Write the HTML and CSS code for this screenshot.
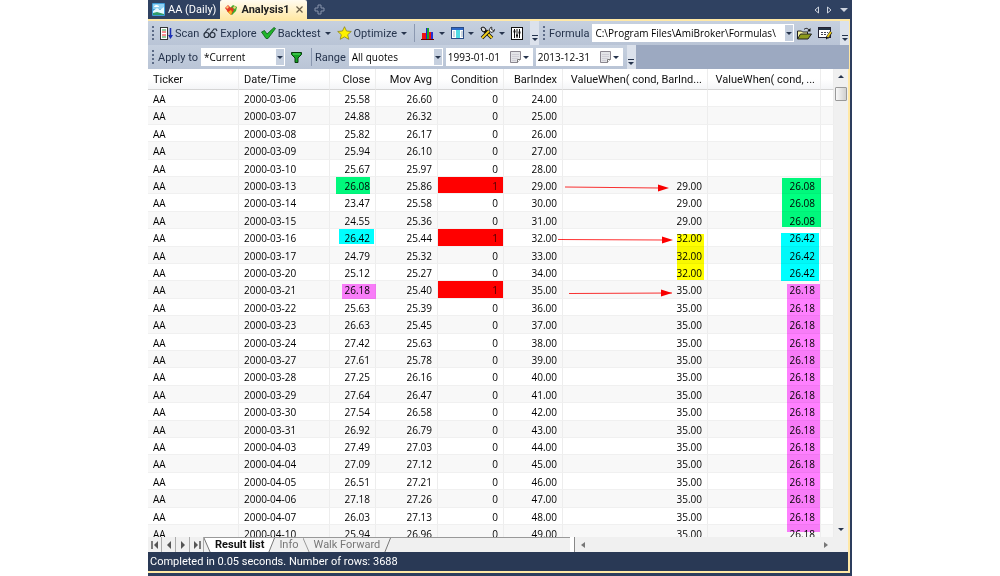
FILE: index.html
```html
<!DOCTYPE html>
<html lang="en">
<head>
    <meta charset="UTF-8">
    <meta name="viewport" content="width=device-width, initial-scale=1.0">
    <title>Analysis1</title>
    <link rel="stylesheet" href="styles.css">
</head>
<body>
    <div class="window">
        <div class="tab-bar">
            <button class="doc-tab">
                <svg width="13" height="13" viewBox="0 0 13 13"><rect width="13" height="13" rx="1" fill="#3f9bd6"/><path d="M1 1h11v5H1z" fill="#8fd0f2"/><path d="M1 8l4-3 3 2 4-3v8H1z" fill="#e8fbff"/><path d="M1 10l4-1 7 2v1H1z" fill="#2f9d6b"/><path d="M2 4c1-3 5-2 5 0z" fill="#fff"/></svg>
                AA (Daily)
            </button>
            <button class="doc-tab active">
                <svg width="14" height="12" viewBox="0 0 14 12"><path d="M1 4l3-3 3 3-3 4z" fill="#e8392b"/><path d="M6 4l3-3 4 2-1 4-4 4-4-3z" fill="#3fae2e"/><path d="M5 5l3-2 2 3-3 5-4-4z" fill="#e03a22"/><path d="M2 3l2-1 1 1-2 2zM9 3l2-1 1 2-2 1z" fill="#ffd27a"/><path d="M4 8l3-2 1 2-1 3z" fill="#f6b21b"/></svg>
                Analysis1
                <svg class="close" width="7" height="7" viewBox="0 0 7 7"><path d="M.5.5l6 6M6.500.5l-6 6" stroke="#6b5f48" stroke-width="1.200"/></svg>
            </button>
            <button class="new-tab" aria-label="New tab">
                <svg width="11" height="11" viewBox="0 0 11 11"><path d="M4 1h3v3h3v3H7v3H4V7H1V4h3z" fill="none" stroke="#8793ab"/></svg>
            </button>
            <div class="tab-nav">
                <svg width="5" height="8" viewBox="0 0 5 8"><path d="M4.500 1v6L1 4z" fill="none" stroke="#ced4df"/></svg>
                <svg width="5" height="8" viewBox="0 0 5 8"><path d="M.5 1v6L4 4z" fill="none" stroke="#ced4df"/></svg>
                <svg width="8" height="4" viewBox="0 0 8 4"><path d="M0 0h8L4 4z" fill="#ced4df"/></svg>
            </div>
        </div>

        <div class="toolbar">
            <div class="tool-group">
                <span class="grip"></span>
                <button class="tool">
                    <svg width="13" height="13" viewBox="0 0 13 13"><rect x=".5" y=".5" width="7" height="12" fill="#fff" stroke="#333"/><path d="M2 3h4M2 10h4" stroke="#2a9d3a"/><path d="M2 5h4M2 8h4" stroke="#e22"/><path d="M10.500 1v9" stroke="#1b2fb5" stroke-width="1.500"/><path d="M8 8h5l-2.500 4z" fill="#1b2fb5"/></svg>
                    Scan
                </button>
                <button class="tool">
                    <svg width="15" height="12" viewBox="0 0 15 12"><g fill="none" stroke="#26303e" stroke-width="1.200"><circle cx="3.500" cy="8" r="2.500"/><circle cx="9.500" cy="8" r="2.500"/><path d="M1 7l4-5h2M7 7l4-5h2l1 2M6 8h1"/></g></svg>
                    Explore
                </button>
                <button class="tool">
                    <svg width="15" height="12" viewBox="0 0 15 12"><path d="M.5 5l3-1.500 2.500 3.500L13 .5l1.500 1L7 11.500H5z" fill="#1fb52a" stroke="#0b5c15" stroke-width=".8"/></svg>
                    Backtest
                    <i class="arrow"></i>
                </button>
                <button class="tool">
                    <svg width="15" height="14" viewBox="0 0 15 14"><path d="M7.500.7l2 4.300 4.800.5-3.600 3.200 1.100 4.600-4.300-2.400-4.300 2.400 1.100-4.600L.7 5.500 5.500 5z" fill="#fff200" stroke="#8b8420" stroke-width=".8"/></svg>
                    Optimize
                    <i class="arrow"></i>
                </button>
                <span class="separator"></span>
                <button class="tool icon" aria-label="Report">
                    <svg width="14" height="13" viewBox="0 0 14 13"><path d="M1 6h4v6H1z" fill="#e11"/><path d="M5 1h3v11H5z" fill="#1ca52a"/><path d="M5 1h1v11H5z" fill="#1a22d8"/><path d="M8 5h3v7H8z" fill="#e11"/><path d="M10 5h2v7h-2z" fill="#2430d0"/><path d="M0 12.500h13" stroke="#600"/></svg>
                    <i class="arrow"></i>
                </button>
                <button class="tool icon" aria-label="Layout">
                    <svg width="13" height="12" viewBox="0 0 13 12"><rect x=".5" y=".5" width="12" height="11" fill="#fff" stroke="#2a4b86"/><path d="M1 1h11v2H1z" fill="#2c68c8"/><path d="M5 3h4v8H5z" fill="#50dbe4"/><path d="M2 5h2M2 7h2M2 9h2M10 5h2M10 7h2M10 9h2" stroke="#9ab"/></svg>
                    <i class="arrow"></i>
                </button>
                <button class="tool icon" aria-label="Settings">
                    <svg width="15" height="14" viewBox="0 0 15 14"><path d="M3 3l9 9" stroke="#111" stroke-width="3.500"/><path d="M1 2l2-1 2 1 1 2-2 2-2-1z" fill="#ddd" stroke="#111"/><path d="M8 8l4 4" stroke="#f3cf1b" stroke-width="2"/><path d="M2 12l7-7" stroke="#111" stroke-width="3.500"/><path d="M2 12l7-7" stroke="#f3cf1b" stroke-width="1.800"/><path d="M9 4l2-3 1 .5-.5 2 2 1 1-1-.5 2-3 1z" fill="#eee" stroke="#111" stroke-width=".8"/></svg>
                    <i class="arrow"></i>
                </button>
                <button class="tool icon" aria-label="Parameters">
                    <svg width="12" height="13" viewBox="0 0 12 13"><rect x=".5" y=".5" width="11" height="12" fill="#fff" stroke="#111"/><path d="M3.500 2v9M6 2v9M8.500 2v9" stroke="#111"/><path d="M2.500 4.500h2M5 8.500h2M7.500 5.500h2" stroke="#111" stroke-width="2"/></svg>
                </button>
                <button class="overflow" aria-label="More"><i class="arrow"></i></button>
            </div>
            <div class="tool-group grow">
                <span class="grip"></span>
                <label for="formula">Formula</label>
                <span class="combo grow">
                    <select id="formula"><option>C:\Program Files\AmiBroker\Formulas\</option></select>
                    <span class="drop"><i class="arrow"></i></span>
                </span>
                <button class="tool icon" aria-label="Open">
                    <svg width="15" height="13" viewBox="0 0 15 13"><path d="M.5 12V4h4l1 1h5v2" fill="#f5f0a0" stroke="#222"/><path d="M.5 12l3-5h11l-3.500 5z" fill="#8d9a1d" stroke="#222"/><path d="M7 2.500c2-2 4-1 5 .500" fill="none" stroke="#111"/><path d="M13.500 1v3.500H10z" fill="#111"/></svg>
                </button>
                <button class="tool icon" aria-label="Edit">
                    <svg width="15" height="13" viewBox="0 0 15 13"><rect x=".5" y=".5" width="12" height="10" fill="#fff" stroke="#223"/><path d="M1 1h11v2H1z" fill="#234"/><path d="M3 5.500h7M3 7.500h6" stroke="#445" stroke-dasharray="2 1"/><path d="M13 5l-4 6" stroke="#222" stroke-width="3"/><path d="M13 5l-3.500 5" stroke="#f2d01c" stroke-width="1.600"/><path d="M8 10l2 1-2 1.500z" fill="#111"/></svg>
                </button>
                <button class="overflow" aria-label="More"><i class="arrow"></i></button>
            </div>
        </div>

        <div class="toolbar">
            <div class="tool-group">
                <span class="grip"></span>
                <label for="apply">Apply to</label>
                <span class="combo apply">
                    <select id="apply"><option>*Current</option></select>
                    <span class="drop"><i class="arrow"></i></span>
                </span>
                <button class="tool filter" aria-label="Filter">
                    <svg width="11" height="11" viewBox="0 0 11 11"><path d="M.5.5h10v2L7 6v4.500H4V6L.5 2.500z" fill="#12a022" stroke="#083b0c"/><path d="M2 2h7" stroke="#5fe06a"/></svg>
                </button>
                <span class="separator"></span>
                <label for="range">Range</label>
                <span class="combo range">
                    <select id="range"><option>All quotes</option></select>
                    <span class="drop"><i class="arrow"></i></span>
                </span>
                <span class="date-box">
                    <input type="text" value="1993-01-01" aria-label="From date">
                    <svg width="11" height="12" viewBox="0 0 11 12"><path d="M.5.5h10v8l-3 3h-7z" fill="#e4e5e8" stroke="#8b8790"/><path d="M2 3.500h7M2 5.500h7M2 7.500h6M2 9.500h4" stroke="#d0ced6"/><path d="M10.500 8.500h-3v3" fill="#fff" stroke="#777"/></svg>
                    <i class="arrow"></i>
                </span>
                <span class="date-box">
                    <input type="text" value="2013-12-31" aria-label="To date">
                    <svg width="11" height="12" viewBox="0 0 11 12"><path d="M.5.5h10v8l-3 3h-7z" fill="#e4e5e8" stroke="#8b8790"/><path d="M2 3.500h7M2 5.500h7M2 7.500h6M2 9.500h4" stroke="#d0ced6"/><path d="M10.500 8.500h-3v3" fill="#fff" stroke="#777"/></svg>
                    <i class="arrow"></i>
                </span>
                <button class="overflow" aria-label="More"><i class="arrow"></i></button>
            </div>
        </div>

        <div class="results">
            <div class="list">
                <table>
                    <colgroup>
                        <col class="c-ticker"><col class="c-date"><col class="c-close"><col class="c-mov"><col class="c-cond"><col class="c-bar"><col class="c-when1"><col class="c-when2"><col>
                    </colgroup>
                    <thead>
                        <tr>
                            <th>Ticker</th>
                            <th>Date/Time</th>
                            <th>Close</th>
                            <th>Mov Avg</th>
                            <th>Condition</th>
                            <th>BarIndex</th>
                            <th>ValueWhen( cond, BarInd...</th>
                            <th>ValueWhen( cond, ...</th>
                            <th></th>
                        </tr>
                    </thead>
                    <tbody id="rows"></tbody>
                </table>
                <!-- marker boxes and arrows drawn over the list -->
                <svg class="marks" width="686" height="468" viewBox="0 0 686 468">
                    <rect x="188" y="108" width="34" height="17" fill="#00ff80"/>
                    <rect x="191" y="160" width="35" height="15" fill="#00ffff"/>
                    <rect x="194" y="215" width="34" height="15" fill="#ff80ff"/>
                    <rect x="529" y="165" width="27" height="46" fill="#ffff00"/>
                    <rect x="634" y="109" width="39" height="49" fill="#00ff80"/>
                    <rect x="633" y="164" width="38" height="48" fill="#00ffff"/>
                    <rect x="639" y="215" width="33" height="248" fill="#ff80ff"/>
                    <g stroke="#f33" stroke-width="1.200">
                        <path d="M417 118l94 1M410 170.500l106 .5M421 224.500l103-.5"/>
                    </g>
                    <g fill="#f00">
                        <path d="M510 115.500l11 3.500-11 3.500zM514 167.500l11 3.500-11 3.500zM513 220.500l11 3.500-11 3.500z"/>
                    </g>
                </svg>
            </div>
            <div class="v-scroll">
                <i class="arrow up"></i>
                <span class="thumb"></span>
                <i class="arrow"></i>
            </div>
        </div>

        <div class="sheet-bar">
            <div class="sheet-nav">
                <button aria-label="First"><svg width="8" height="8" viewBox="0 0 8 8"><path d="M1 0v8" stroke="#555" stroke-width="1.500"/><path d="M7 0v8L3 4z" fill="#555"/></svg></button>
                <button aria-label="Previous"><svg width="8" height="8" viewBox="0 0 8 8"><path d="M6 0v8L2 4z" fill="#555"/></svg></button>
                <button aria-label="Next"><svg width="8" height="8" viewBox="0 0 8 8"><path d="M2 0v8l4-4z" fill="#555"/></svg></button>
                <button aria-label="Last"><svg width="8" height="8" viewBox="0 0 8 8"><path d="M7 0v8" stroke="#555" stroke-width="1.500"/><path d="M1 0v8l4-4z" fill="#555"/></svg></button>
            </div>
            <div class="sheets">
                <svg width="7" height="15" viewBox="0 0 7 15"><path d="M0 0h7v15z" fill="#fff"/><path d="M0 0l6.500 15" stroke="#777"/></svg>
                <button class="sheet active">Result list</button>
                <svg width="7" height="15" viewBox="0 0 7 15"><path d="M0 0h7L0 15z" fill="#fff"/><path d="M6.500 0L.5 15" stroke="#777"/></svg>
                <button class="sheet">Info</button>
                <svg width="7" height="15" viewBox="0 0 7 15"><path d="M0 0l6.500 15" stroke="#999"/></svg>
                <button class="sheet">Walk Forward</button>
                <svg width="7" height="15" viewBox="0 0 7 15"><path d="M6.500 0L.5 15" stroke="#777"/></svg>
            </div>
            <div class="splitter"></div>
            <div class="h-scroll">
                <svg width="4" height="6" viewBox="0 0 4 6"><path d="M4 0v6L0 3z" fill="#777"/></svg>
                <svg width="4" height="6" viewBox="0 0 4 6"><path d="M0 0v6l4-3z" fill="#777"/></svg>
            </div>
        </div>
        <div class="status">Completed in 0.05 seconds. Number of rows: 3688</div>
    </div>

    <script src="script.js"></script>
</body>
</html>
```
FILE: styles.css
```css
* {
    box-sizing: border-box;
}

body {
    margin: 0;
    background: #fff;
    color: #111;
    font-family: Roboto, "Noto Sans", sans-serif;
    font-size: 11px;
}

button, select, input {
    font: inherit;
    color: inherit;
    margin: 0;
    padding: 0;
    border: 0;
    border-radius: 0;
    background: none;
}

svg {
    display: block;
    flex: none;
}

.window {
    display: flex;
    flex-direction: column;
    max-width: 704px;
    height: 100vh;
    margin: 0 auto;
    padding-right: 2px;
    padding-bottom: 3px;
    background: #2d3e5e;
}

/* document tabs */
.tab-bar {
    display: flex;
    height: 19px;
    color: #fff;
    background: #2f4161;
}

.doc-tab {
    display: flex;
    align-items: center;
    gap: 3px;
    padding: 0 4px;
    white-space: nowrap;
}

.doc-tab.active {
    color: #222;
    font-weight: bold;
    background: linear-gradient(#fffbf0, #ffe8a6);
    border-radius: 2px 2px 0 0;
}

.close {
    margin-left: 3px;
}

.new-tab {
    padding: 0 7px;
}

.tab-nav {
    display: flex;
    align-items: center;
    gap: 8px;
    margin-left: auto;
    padding-right: 2px;
}

/* toolbars */
.toolbar {
    display: flex;
    height: 24px;
    border-right: 1px solid #ffe8a6;
    background: #9ca9c1;
    color: #26344d;
}

.tab-bar + .toolbar {
    height: 26px;
    border-top: 2px solid #ffe8a6;
}

.tool-group {
    display: flex;
    align-items: center;
    padding-left: 4px;
    background: linear-gradient(#c6d0df, #b9c4d6);
    white-space: nowrap;
}

.grow {
    flex: 1;
    min-width: 0;
}

.grip {
    width: 2px;
    height: 14px;
    margin-right: 4px;
    background: repeating-linear-gradient(#5c6b87 0 2px, transparent 2px 4px);
}

.tool {
    display: flex;
    align-items: center;
    gap: 2px;
    padding: 0 2px;
}

.tool.icon {
    gap: 4px;
    padding: 0 3px;
}

.arrow {
    flex: none;
    width: 0;
    height: 0;
    border: 3px solid transparent;
    border-top-color: #26344d;
    border-bottom: 0;
}

.tool .arrow {
    margin: 0 2px;
}

.tool.icon .arrow {
    margin: 0;
}

.separator {
    width: 1px;
    height: 18px;
    margin: 0 3px;
    background: #8b98b0;
}

.overflow {
    align-self: stretch;
    display: flex;
    align-items: flex-end;
    justify-content: center;
    width: 9px;
    margin-left: 4px;
    padding-bottom: 4px;
    background: #dce2ec;
}

.overflow .arrow {
    box-shadow: 0 -2px #dce2ec, 0 -3px #26344d;
}

.combo, .date-box {
    display: flex;
    align-items: center;
    height: 18px;
    margin-left: 3px;
    background: #fff;
    color: #000;
    font-family: "Open Sans", "Noto Sans", sans-serif;
    font-size: 10px;
}

.combo select {
    flex: 1;
    min-width: 0;
    height: 18px;
    padding-left: 3px;
    appearance: none;
}

.drop {
    display: flex;
    align-items: center;
    justify-content: center;
    width: 10px;
    height: 18px;
    border: 1px solid #fff;
    background: #c6d0df;
}

.apply {
    width: 84px;
}

.range {
    width: 94px;
}

.date-box {
    gap: 2px;
    width: 87px;
    padding: 0 4px 0 2px;
}

.date-box input {
    flex: 1;
    min-width: 0;
}

.filter {
    padding: 0 6px;
}

/* result list */
.results {
    display: flex;
    flex: 1;
    min-height: 0;
    border-right: 2px solid #ffe8a6;
    background: #fff;
}

.list {
    position: relative;
    flex: 1;
    overflow: hidden;
}

table {
    width: 100%;
    table-layout: fixed;
    border-collapse: separate;
    border-spacing: 0;
}

.c-ticker { width: 91px; }
.c-date { width: 91px; }
.c-close { width: 46px; }
.c-mov { width: 62px; }
.c-cond { width: 66px; }
.c-bar { width: 59px; }
.c-when1 { width: 145px; }
.c-when2 { width: 113px; }

th, td {
    padding: 0 5px;
    border-right: 1px solid #ededed;
    text-align: right;
    white-space: nowrap;
}

th:nth-child(-n+2), td:nth-child(-n+2) {
    text-align: left;
}

th {
    height: 21px;
    border-bottom: 1px solid #d5d5d5;
    background: linear-gradient(#fff 50%, #f4f5f7);
    font-weight: normal;
}

td {
    height: 17px;
    padding-top: 1px;
    border-bottom: 1px solid #f0f0f0;
    color: #000;
    font-family: "Open Sans", "Noto Sans", sans-serif;
    font-size: 10px;
    line-height: 14px;
}

tr:nth-child(5n+2) td, tr:nth-child(5n+4) td {
    height: 18px;
}

tbody tr:nth-child(even) {
    background: #f8f8f8;
}

td.hit {
    background: #f00;
    color: #400;
}

.marks {
    position: absolute;
    top: 0;
    left: 0;
    mix-blend-mode: multiply;
}

.v-scroll {
    display: flex;
    flex-direction: column;
    align-items: center;
    width: 14px;
    padding: 6px 0;
    background: #f0f0f0;
}

.v-scroll .arrow:last-child {
    margin-top: auto;
}

.up {
    transform: rotate(180deg);
}

.thumb {
    width: 12px;
    height: 14px;
    margin-top: 9px;
    border: 1px solid #999;
    border-radius: 1px;
    background: linear-gradient(90deg, #f8f8f8, #d0d0d0);
}

/* sheet tabs */
.sheet-bar {
    display: flex;
    height: 15px;
    border-right: 2px solid #ffe8a6;
    background: #f0f0f0;
    color: #777;
}

.sheet-nav {
    display: flex;
}

.sheet-nav button {
    display: flex;
    align-items: center;
    justify-content: center;
    width: 14px;
    border-right: 1px solid #aaa;
}

.sheets {
    display: flex;
    flex: 1;
    border-top: 1px solid #999;
}

.sheet {
    padding: 0 4px;
    line-height: 12px;
    white-space: nowrap;
}

.sheet.active {
    background: #fff;
    color: #111;
    font-weight: bold;
}

.splitter {
    width: 5px;
    border-right: 1px solid #888;
    background: #fff;
}

.h-scroll {
    display: flex;
    align-items: center;
    justify-content: space-between;
    width: 39%;
    padding: 0 20px 0 6px;
}

.status {
    height: 21px;
    padding-left: 2px;
    border-right: 2px solid #ffe8a6;
    border-bottom: 2px solid #ffe8a6;
    background: #293955;
    color: #fff;
    line-height: 19px;
}
```
FILE: script.js
```js
// date, close, moving average, condition
const bars = [
    ["2000-03-06", "25.58", "26.60", 0],
    ["2000-03-07", "24.88", "26.32", 0],
    ["2000-03-08", "25.82", "26.17", 0],
    ["2000-03-09", "25.94", "26.10", 0],
    ["2000-03-10", "25.67", "25.97", 0],
    ["2000-03-13", "26.08", "25.86", 1],
    ["2000-03-14", "23.47", "25.58", 0],
    ["2000-03-15", "24.55", "25.36", 0],
    ["2000-03-16", "26.42", "25.44", 1],
    ["2000-03-17", "24.79", "25.32", 0],
    ["2000-03-20", "25.12", "25.27", 0],
    ["2000-03-21", "26.18", "25.40", 1],
    ["2000-03-22", "25.63", "25.39", 0],
    ["2000-03-23", "26.63", "25.45", 0],
    ["2000-03-24", "27.42", "25.63", 0],
    ["2000-03-27", "27.61", "25.78", 0],
    ["2000-03-28", "27.25", "26.16", 0],
    ["2000-03-29", "27.64", "26.47", 0],
    ["2000-03-30", "27.54", "26.58", 0],
    ["2000-03-31", "26.92", "26.79", 0],
    ["2000-04-03", "27.49", "27.03", 0],
    ["2000-04-04", "27.09", "27.12", 0],
    ["2000-04-05", "26.51", "27.21", 0],
    ["2000-04-06", "27.18", "27.26", 0],
    ["2000-04-07", "26.03", "27.13", 0],
    ["2000-04-10", "25.94", "26.96", 0]
];

let lastIndex = "";
let lastClose = "";

bars.forEach(([date, close, avg, cond], i) => {
    const index = (24 + i).toFixed(2);
    if (cond) {
        lastIndex = index;
        lastClose = close;
    }
    const tr = document.createElement("tr");
    ["AA", date, close, avg, cond, index, lastIndex, lastClose, ""].forEach(value => {
        const td = document.createElement("td");
        td.textContent = value;
        tr.appendChild(td);
    });
    if (cond) {
        tr.children[4].classList.add("hit");
    }
    document.getElementById("rows").appendChild(tr);
});
```
